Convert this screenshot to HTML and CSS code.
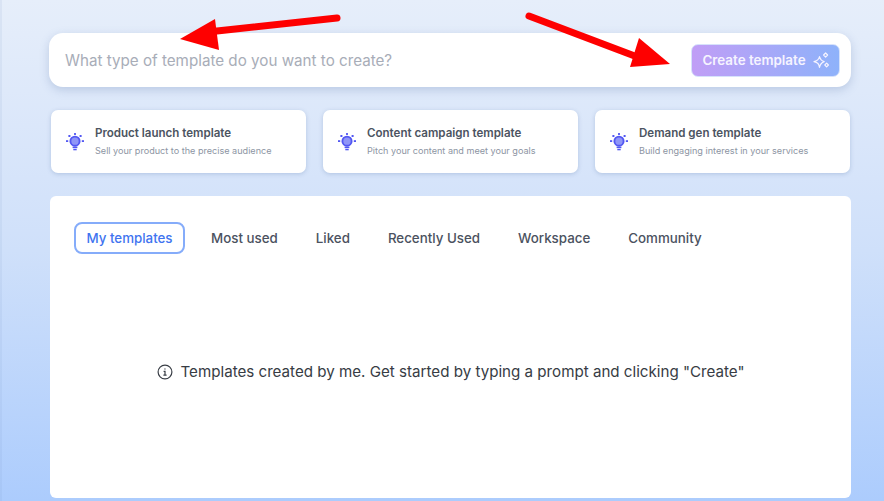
FILE: index.html
```html
<!DOCTYPE html>
<html lang="en">
<head>
<meta charset="utf-8">
<title>Create template</title>
<link rel="stylesheet" href="styles.css">
</head>
<body>
<main class="page">
  <section class="prompt">
    <span class="placeholder">What type of template do you want to create?</span>
    <button class="create">Create template
      <svg class="sparkle" width="17" height="17" viewBox="0 0 17 17" fill="none" stroke="currentColor" stroke-width="1.2" stroke-linejoin="round"><path d="M6.5 4.6 C7.2 7.4 8 8.6 11.2 9.6 C8 10.6 7.2 11.8 6.5 15.4 C5.8 11.8 5 10.6 1 9.6 C5 8.6 5.8 7.4 6.5 4.6Z"/><path d="M12.6 1 14.6 3 12.6 5 10.6 3Z"/><path d="M13.6 11.2 15.4 13 13.6 14.8 11.8 13Z"/></svg>
    </button>
  </section>
  <section class="cards">
    <article class="card">
      <svg class="bulb" width="18" height="20" viewBox="0 0 18 20"><circle cx="9" cy="9.2" r="4.6" fill="#8f95f7" stroke="#5257f2" stroke-width="1.9"/><rect x="6.6" y="14.6" width="4.8" height="1.5" fill="#5257f2"/><rect x="7.3" y="16.8" width="3.4" height="1.5" fill="#5257f2"/><g fill="#5257f2"><rect x="8.1" y="1" width="1.8" height="2"/><rect x="2.4" y="3" width="2" height="2"/><rect x="13.6" y="3" width="2" height="2"/><rect x="0" y="8.2" width="2.2" height="1.8"/><rect x="15.8" y="8.2" width="2.2" height="1.8"/></g></svg>
      <div class="card-text"><h3>Product launch template</h3><p>Sell your product to the precise audience</p></div>
    </article>
    <article class="card">
      <svg class="bulb" width="18" height="20" viewBox="0 0 18 20"><circle cx="9" cy="9.2" r="4.6" fill="#8f95f7" stroke="#5257f2" stroke-width="1.9"/><rect x="6.6" y="14.6" width="4.8" height="1.5" fill="#5257f2"/><rect x="7.3" y="16.8" width="3.4" height="1.5" fill="#5257f2"/><g fill="#5257f2"><rect x="8.1" y="1" width="1.8" height="2"/><rect x="2.4" y="3" width="2" height="2"/><rect x="13.6" y="3" width="2" height="2"/><rect x="0" y="8.2" width="2.2" height="1.8"/><rect x="15.8" y="8.2" width="2.2" height="1.8"/></g></svg>
      <div class="card-text"><h3>Content campaign template</h3><p>Pitch your content and meet your goals</p></div>
    </article>
    <article class="card">
      <svg class="bulb" width="18" height="20" viewBox="0 0 18 20"><circle cx="9" cy="9.2" r="4.6" fill="#8f95f7" stroke="#5257f2" stroke-width="1.9"/><rect x="6.6" y="14.6" width="4.8" height="1.5" fill="#5257f2"/><rect x="7.3" y="16.8" width="3.4" height="1.5" fill="#5257f2"/><g fill="#5257f2"><rect x="8.1" y="1" width="1.8" height="2"/><rect x="2.4" y="3" width="2" height="2"/><rect x="13.6" y="3" width="2" height="2"/><rect x="0" y="8.2" width="2.2" height="1.8"/><rect x="15.8" y="8.2" width="2.2" height="1.8"/></g></svg>
      <div class="card-text"><h3>Demand gen template</h3><p>Build engaging interest in your services</p></div>
    </article>
  </section>
  <section class="panel">
    <nav class="tabs">
      <span class="tab active">My templates</span>
      <span class="tab">Most used</span>
      <span class="tab">Liked</span>
      <span class="tab">Recently Used</span>
      <span class="tab">Workspace</span>
      <span class="tab">Community</span>
    </nav>
    <p class="hint">
      <svg width="16" height="16" viewBox="0 0 16 16" fill="none" stroke="#3a3f47" stroke-width="1.2"><circle cx="8" cy="8" r="6.9"/><path d="M6.6 7.3H8V11.2M6.4 11.2H9.6"/><path d="M7.3 4.4H8.6V5.6H7.3Z" fill="#3a3f47" stroke="none"/></svg>
      Templates created by me. Get started by typing a prompt and clicking "Create"
    </p>
  </section>
</main>
<svg class="arrows" width="884" height="501" viewBox="0 0 884 501" fill="#fe0000">
  <path d="M217 31 L337 18" stroke="#fe0000" stroke-width="7" stroke-linecap="round"/>
  <path d="M180 39 L215 19 L219 50Z"/>
  <path d="M529 16 L640 58" stroke="#fe0000" stroke-width="7" stroke-linecap="round"/>
  <path d="M670 64 L639 38 L630 67Z"/>
</svg>
</body>
</html>
```
FILE: styles.css
```css
* { box-sizing: border-box; }
html, body { margin: 0; height: 501px; overflow: hidden; }
body {
  font-family: Inter, "Liberation Sans", sans-serif;
  background: linear-gradient(180deg, #e6eefa 0%, #dbe7fa 25%, #cfe0fa 50%, #acccfd 100%);
  box-shadow: inset 2px 0 0 rgba(120, 150, 200, .1);
  position: relative;
}
.page {
  padding: 33px 33px 3px 49px;
  height: 501px;
  display: flex;
  flex-direction: column;
}
.prompt {
  height: 54px;
  background: #fff;
  border-radius: 14px;
  box-shadow: 0 3px 10px rgba(90, 120, 170, .28);
  display: flex;
  align-items: center;
  justify-content: space-between;
  padding: 0 11px 0 16px;
  flex: none;
}
.placeholder { font-size: 15.2px; color: #a8adb8; }
.create {
  width: 149px;
  height: 33px;
  border: 1px solid #d6e2fb;
  border-radius: 7px;
  background: linear-gradient(90deg, #c09ef6, #8eb2fa);
  color: #f6f4ff;
  font: 600 13.4px Inter, "Liberation Sans", sans-serif;
  display: flex;
  align-items: center;
  justify-content: center;
  gap: 7px;
  padding: 0 0 0 1px;
}
.cards {
  display: flex;
  gap: 17px;
  margin: 23px 1px 23px 2px;
  flex: none;
}
.card {
  width: 255px;
  height: 63px;
  background: #fff;
  border-radius: 7px;
  box-shadow: 0 1px 4px rgba(90, 120, 170, .3);
  display: flex;
  align-items: center;
  padding: 0 0 0 15px;
  gap: 11px;
}
.bulb { flex: none; }
.card-text h3 { margin: 0 0 5px; font-size: 11.55px; line-height: 14px; font-weight: 600; color: #4c5461; }
.card-text p { margin: 0; font-size: 9.1px; line-height: 12px; color: #8d95a3; }
.panel {
  flex: 1;
  margin-left: 1px;
  background: #fff;
  border-radius: 6px;
  padding: 26px 24px 0;
  display: flex;
  flex-direction: column;
}
.tabs { display: flex; gap: 14px; align-items: center; }
.tab { font-size: 13.33px; font-weight: 500; color: #4b5260; line-height: 32px; padding: 0 12px; }
.tab.active {
  width: 111px;
  padding: 0;
  text-align: center;
  line-height: 28px;
  border: 2px solid #85acfa;
  border-radius: 8px;
  color: #3f74f0;
}
.hint {
  margin: 108px 0 0;
  display: flex;
  justify-content: center;
  align-items: center;
  gap: 8px;
  font-size: 15.15px;
  line-height: 20px;
  color: #373c44;
}
.arrows { position: absolute; left: 0; top: 0; pointer-events: none; }
```
